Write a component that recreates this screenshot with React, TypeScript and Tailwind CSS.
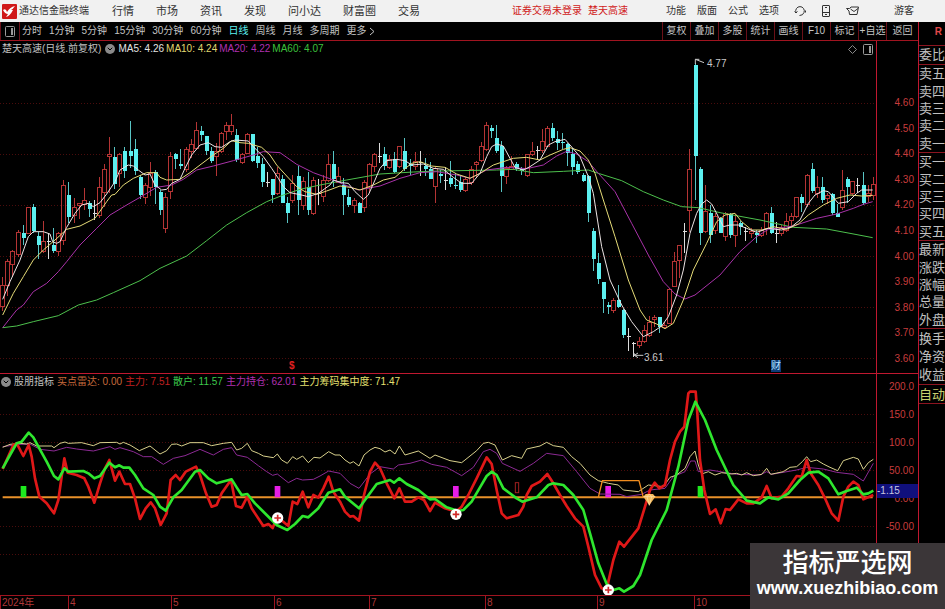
import { ChevronDown } from "lucide-react";

const STEP = 15.27;
const FIRST = 8.4;

// u = up (hollow), d = down (filled), w = flat
type Kind = "u" | "d" | "w";
// kind, high, body top, body bottom, low
type Candle = [Kind, number, number, number, number];

const candles: Candle[] = [
  ["u", 562, 585, 648, 662], ["u", 508, 515, 585, 618], ["u", 480, 485, 522, 560], ["u", 420, 426, 492, 500],
  ["d", 405, 430, 443, 465], ["u", 352, 353, 430, 432], ["d", 343, 352, 422, 430], ["d", 425, 437, 466, 506],
  ["u", 393, 455, 485, 490], ["w", 428, 455, 455, 508], ["d", 415, 466, 482, 490], ["u", 425, 430, 485, 498],
  ["u", 270, 285, 450, 466], ["d", 277, 314, 381, 400], ["u", 325, 352, 375, 400], ["u", 338, 340, 347, 388],
  ["u", 295, 332, 343, 360], ["d", 332, 340, 358, 380], ["w", 330, 370, 370, 390], ["u", 262, 293, 375, 383],
  ["u", 222, 238, 308, 350], ["u", 140, 192, 200, 308], ["d", 170, 200, 282, 298], ["u", 190, 192, 250, 290],
  ["d", 170, 184, 244, 265], ["d", 93, 184, 197, 235], ["d", 146, 178, 244, 256], ["d", 255, 260, 314, 328],
  ["u", 278, 287, 322, 342], ["u", 216, 250, 293, 318], ["d", 240, 247, 290, 343], ["d", 300, 305, 360, 375],
  ["u", 310, 322, 415, 428], ["u", 187, 200, 305, 326], ["d", 190, 193, 206, 237], ["d", 178, 223, 228, 236],
  ["u", 172, 178, 238, 245], ["u", 146, 162, 184, 205], ["u", 95, 122, 176, 180], ["d", 107, 124, 135, 152],
  ["d", 137, 138, 182, 195], ["d", 170, 184, 214, 220], ["u", 160, 184, 200, 258], ["u", 126, 130, 185, 190],
  ["u", 95, 107, 125, 150], ["u", 72, 106, 124, 135], ["d", 117, 136, 210, 215], ["u", 190, 194, 218, 222],
  ["u", 128, 132, 190, 193], ["d", 132, 132, 214, 216], ["d", 172, 198, 220, 235], ["d", 205, 222, 276, 290],
  ["w", 245, 277, 277, 290], ["d", 266, 268, 314, 338], ["u", 230, 250, 310, 315], ["d", 255, 268, 338, 340],
  ["d", 322, 338, 368, 398], ["u", 255, 280, 330, 340], ["d", 228, 258, 330, 376], ["u", 262, 275, 345, 360],
  ["d", 245, 291, 360, 376], ["u", 262, 270, 370, 376], ["w", 268, 310, 310, 345], ["u", 255, 270, 318, 335],
  ["u", 192, 222, 270, 275], ["d", 182, 222, 268, 290], ["u", 232, 258, 276, 280], ["d", 265, 284, 314, 376],
  ["d", 298, 320, 344, 350], ["u", 325, 330, 346, 368], ["d", 335, 338, 368, 370], ["u", 270, 278, 352, 365],
  ["u", 220, 224, 292, 310], ["u", 190, 192, 230, 245], ["w", 160, 200, 200, 218], ["d", 170, 192, 228, 240],
  ["u", 195, 208, 232, 238], ["d", 185, 208, 246, 250], ["u", 168, 170, 228, 235], ["d", 145, 184, 236, 243],
  ["d", 208, 222, 228, 256], ["u", 186, 214, 230, 240], ["w", 182, 216, 216, 258], ["d", 205, 228, 238, 258],
  ["d", 216, 238, 266, 268], ["u", 230, 235, 288, 338], ["d", 240, 252, 257, 280], ["w", 230, 272, 272, 300],
  ["d", 214, 265, 283, 290], ["d", 250, 284, 288, 298], ["d", 255, 275, 300, 305], ["u", 262, 268, 300, 305],
  ["u", 228, 238, 278, 285], ["u", 214, 216, 224, 262], ["u", 155, 170, 212, 215], ["u", 95, 106, 178, 184],
  ["d", 105, 115, 122, 144], ["d", 106, 145, 182, 190], ["d", 152, 168, 258, 306], ["u", 228, 235, 260, 282],
  ["u", 198, 230, 238, 240], ["d", 215, 222, 238, 242], ["d", 230, 238, 243, 255], ["u", 192, 194, 255, 262],
  ["u", 155, 184, 192, 198], ["w", 168, 180, 180, 208], ["u", 118, 155, 180, 190], ["u", 108, 116, 168, 172],
  ["d", 98, 115, 144, 152], ["d", 122, 148, 158, 180], ["d", 130, 155, 160, 178], ["d", 158, 162, 188, 228],
  ["d", 178, 192, 230, 256], ["d", 212, 222, 246, 252], ["d", 248, 254, 274, 277], ["d", 255, 259, 368, 396],
  ["d", 415, 423, 506, 544], ["d", 490, 520, 566, 582], ["d", 576, 577, 628, 668], ["d", 635, 645, 651, 672],
  ["u", 625, 630, 662, 668], ["d", 585, 630, 650, 655], ["d", 658, 660, 736, 745], ["w", 715, 738, 738, 783],
  ["w", 755, 760, 760, 800], ["u", 740, 753, 767, 773], ["u", 705, 722, 755, 758], ["u", 678, 698, 735, 742],
  ["u", 675, 682, 688, 710], ["d", 682, 682, 712, 728], ["u", 695, 705, 712, 715], ["u", 595, 597, 700, 702],
  ["u", 485, 513, 590, 592], ["u", 465, 467, 510, 565], ["w", 398, 425, 425, 490], ["u", 178, 238, 360, 425],
  ["d", -82, -76, 198, 330], ["d", 230, 238, 428, 465], ["u", 285, 365, 425, 430], ["d", 345, 368, 435, 460],
  ["u", 370, 380, 420, 432], ["d", 380, 383, 428, 430], ["u", 365, 370, 438, 452], ["d", 368, 372, 436, 445],
  ["u", 372, 395, 435, 472], ["d", 392, 398, 412, 436], ["w", 410, 425, 427, 452], ["u", 415, 423, 430, 445],
  ["d", 420, 428, 435, 460], ["u", 412, 422, 436, 440], ["u", 365, 370, 415, 435], ["d", 352, 370, 428, 432],
  ["w", 395, 430, 430, 460], ["u", 405, 415, 430, 438], ["u", 370, 395, 422, 425], ["u", 370, 378, 392, 410],
  ["u", 320, 323, 378, 383], ["d", 312, 322, 338, 365], ["u", 252, 255, 342, 350], ["d", 220, 238, 304, 308],
  ["u", 258, 292, 310, 325], ["d", 260, 292, 330, 338], ["u", 310, 317, 325, 342], ["d", 308, 313, 368, 375],
  ["d", 342, 370, 380, 382], ["u", 240, 300, 352, 360], ["d", 260, 266, 290, 340], ["u", 272, 275, 310, 315],
  ["w", 265, 285, 285, 310], ["d", 246, 285, 340, 345], ["u", 285, 310, 320, 335], ["u", 262, 282, 315, 330],
];

const averages = [
  {
    color: "#4dc04d",
    points:
      "8,713 50,708 100,695 175,677 235,645 290,630 340,608 420,572 480,535 560,498 620,452 680,405 740,368 800,335 850,315 900,298 960,285 1040,270 1140,252 1240,246 1320,243 1490,240 1540,238 1600,248 1690,244 1765,240 1795,250 1865,272 1930,305 1990,330 2045,350 2095,353 2160,368 2280,390 2380,412 2480,417 2550,430 2618,443",
  },
  {
    color: "#a832a8",
    points:
      "8,713 50,660 70,645 100,605 140,580 175,545 200,515 240,465 290,415 330,375 380,345 420,322 470,292 515,285 550,268 590,240 640,228 700,212 760,195 790,185 840,188 890,223 940,248 1000,270 1030,283 1075,300 1140,288 1200,265 1260,248 1310,245 1370,255 1410,265 1460,240 1520,232 1580,236 1630,225 1670,198 1700,184 1730,192 1765,215 1795,250 1845,305 1895,400 1945,495 1990,575 2025,612 2055,627 2085,615 2160,555 2220,485 2270,440 2305,418 2380,408 2450,385 2510,372 2560,355 2590,343 2618,335",
  },
  {
    color: "#e6dc78",
    points:
      "8,675 40,610 70,560 100,510 130,480 165,450 200,418 240,408 285,385 320,335 335,315 345,313 370,285 400,265 440,248 470,248 480,262 500,270 540,268 570,248 600,225 640,195 670,175 695,152 720,158 745,160 785,172 810,195 830,225 860,258 890,290 915,305 950,313 980,303 1020,288 1050,292 1080,300 1120,285 1150,270 1185,262 1210,240 1235,220 1260,215 1295,228 1335,232 1370,252 1410,265 1440,250 1480,225 1540,205 1580,202 1620,210 1650,195 1690,178 1710,173 1740,183 1765,210 1785,250 1810,330 1845,440 1885,570 1920,660 1940,690 1970,702 1995,716 2020,700 2050,630 2080,540 2120,460 2150,395 2175,375 2205,370 2225,395 2255,420 2285,420 2320,410 2360,418 2395,402 2425,375 2470,345 2510,325 2550,315 2585,318 2618,316",
  },
  {
    color: "#ece4e4",
    points:
      "8,628 30,575 60,510 85,440 100,425 130,425 150,432 158,455 170,460 180,455 200,412 225,370 245,345 265,340 280,350 300,338 320,312 345,275 360,240 385,225 400,228 415,240 435,255 450,252 465,285 485,300 500,298 515,280 540,268 555,235 575,195 600,165 625,158 645,170 665,172 690,155 705,150 745,153 760,170 790,200 815,235 835,265 850,290 870,308 900,314 925,320 955,310 990,285 1000,270 1025,278 1045,280 1065,305 1090,328 1105,315 1125,270 1140,235 1160,212 1190,208 1215,212 1235,225 1270,222 1300,235 1330,238 1360,262 1385,280 1415,280 1440,250 1460,200 1475,170 1490,162 1510,168 1530,205 1545,232 1570,240 1590,230 1620,210 1645,165 1665,155 1695,148 1710,165 1740,200 1765,260 1780,310 1805,470 1830,570 1865,645 1895,695 1930,740 1960,725 1985,708 2005,680 2030,615 2050,540 2070,430 2090,370 2105,342 2120,330 2135,342 2155,380 2170,410 2190,405 2215,405 2240,415 2270,427 2305,415 2345,420 2375,410 2400,390 2425,340 2445,315 2470,302 2485,305 2515,340 2545,335 2570,310 2585,300 2618,300",
  },
];

const indicatorLines = [
  {
    color: "#8c2a94",
    width: 3,
    points:
      "8,140 60,133 90,132 120,148 162,153 200,142 230,147 280,153 330,140 345,148 360,143 400,155 430,170 455,170 490,193 520,175 555,167 600,148 640,165 670,148 695,143 710,165 742,172 775,197 800,215 818,226 832,222 865,248 890,235 908,240 940,238 960,228 986,213 1020,220 1050,250 1077,265 1110,222 1140,200 1180,207 1195,195 1230,190 1265,180 1295,193 1340,202 1385,227 1420,202 1450,155 1470,148 1490,160 1507,190 1560,214 1600,190 1640,160 1690,167 1730,215 1770,265 1800,282 1860,283 1880,290 1925,283 1950,270 1995,265 2020,230 2055,215 2072,183 2085,183 2095,215 2130,210 2210,223 2280,225 2300,215 2315,223 2390,210 2420,202 2470,207 2510,217 2560,223 2590,243 2620,190",
  },
  {
    color: "#d8d08c",
    width: 3,
    points:
      "8,142 30,133 60,130 80,132 90,128 110,138 155,138 162,143 180,130 195,126 205,130 245,128 280,137 300,128 350,127 360,132 370,127 390,135 418,152 450,138 480,162 500,152 515,133 530,132 545,138 570,128 610,128 635,137 670,130 695,127 710,150 725,145 742,130 755,152 775,160 790,168 820,173 832,162 845,180 862,190 878,170 890,178 908,168 925,188 942,172 960,174 986,155 1005,165 1020,165 1035,180 1050,190 1060,185 1077,198 1092,165 1110,150 1125,142 1140,146 1155,156 1170,150 1185,162 1198,138 1215,165 1255,153 1290,175 1305,165 1350,182 1385,188 1410,168 1430,152 1450,130 1465,127 1485,135 1507,180 1535,167 1565,175 1580,147 1620,138 1640,127 1660,137 1690,142 1715,170 1740,190 1770,225 1795,242 1825,250 1855,255 1870,270 1915,275 1945,255 1990,260 2010,232 2030,225 2055,205 2070,170 2085,153 2095,195 2105,222 2125,215 2145,225 2165,218 2195,222 2210,220 2225,225 2240,218 2260,227 2285,223 2300,205 2312,223 2350,215 2370,202 2390,200 2407,185 2420,170 2432,185 2450,180 2470,192 2490,202 2513,212 2530,182 2560,172 2575,177 2590,208 2605,188 2620,178",
  },
  {
    color: "#f08c1e",
    width: 4,
    points: "1795,292 1807,242 1917,242 1930,292",
  },
  {
    color: "#e01818",
    width: 8,
    points:
      "8,207 40,135 50,130 70,168 86,135 95,170 105,235 118,290 140,310 162,340 175,300 185,230 193,175 203,218 230,225 253,235 265,260 283,308 300,250 315,205 328,180 345,242 358,215 375,252 390,252 405,295 420,357 437,325 452,307 465,325 482,375 500,340 512,240 527,225 540,240 557,215 588,200 600,225 618,280 635,320 650,315 665,280 693,240 708,318 725,323 742,290 755,325 790,378 805,372 818,384 832,350 865,378 878,305 892,312 908,275 925,322 940,285 955,293 970,265 986,230 1000,275 1020,305 1035,335 1050,350 1060,348 1077,362 1092,285 1110,215 1125,188 1140,205 1160,250 1183,295 1198,265 1215,305 1235,305 1255,292 1272,300 1290,333 1305,308 1335,325 1368,335 1385,320 1405,285 1430,235 1460,172 1475,192 1490,270 1505,340 1520,355 1555,345 1570,320 1580,285 1595,258 1620,245 1642,222 1660,250 1680,285 1700,318 1725,355 1750,380 1765,440 1785,525 1805,565 1822,570 1825,545 1840,480 1858,425 1872,440 1915,385 1935,320 1950,270 1964,248 1978,265 1995,255 2010,180 2025,125 2040,95 2053,80 2065,-20 2070,-25 2087,-25 2092,40 2100,180 2113,270 2130,342 2147,328 2162,370 2177,327 2190,330 2215,298 2240,310 2260,310 2285,292 2300,258 2315,295 2345,290 2365,265 2390,228 2405,230 2420,180 2432,220 2455,255 2475,295 2495,340 2515,362 2530,290 2545,260 2560,245 2575,255 2590,298 2620,285",
  },
  {
    color: "#2ee62e",
    width: 8,
    points:
      "8,205 30,165 50,130 65,125 86,98 100,112 118,145 140,185 162,228 175,238 193,205 205,215 250,213 265,220 283,235 300,228 328,188 345,202 358,196 370,203 388,203 405,225 430,265 460,285 480,320 497,332 520,292 545,270 585,215 600,210 625,235 650,250 695,238 710,262 725,285 742,282 765,310 800,345 830,375 862,390 885,372 908,348 925,352 955,325 985,278 1020,268 1035,290 1077,325 1095,300 1130,252 1170,240 1182,248 1198,235 1220,252 1255,270 1290,298 1305,297 1340,322 1375,333 1390,330 1415,305 1440,262 1460,228 1475,215 1490,225 1510,265 1550,295 1567,305 1610,292 1645,255 1660,250 1690,255 1720,285 1750,330 1770,400 1795,490 1820,552 1840,570 1858,565 1872,575 1900,558 1920,525 1955,420 2000,330 2035,200 2065,60 2086,5 2115,60 2150,150 2200,255 2240,302 2280,310 2305,292 2335,298 2365,280 2400,240 2425,218 2455,215 2485,235 2515,283 2540,273 2570,263 2590,283 2605,280 2620,272",
  },
];

const blocks = [
  { x: 62, color: "#1eea1e" },
  { x: 824, color: "#e61ee6" },
  { x: 1359, color: "#e61ee6" },
  { x: 1816, color: "#e61ee6" },
  { x: 2093, color: "#1eea1e" },
];

const crosses = [
  [833, 354],
  [1368, 343],
  [1825, 570],
];

const menu = ["行情", "市场", "资讯", "发现", "问小达", "财富圈", "交易"];
const tools = ["功能", "版面", "公式", "选项"];
const periods = ["分时", "1分钟", "5分钟", "15分钟", "30分钟", "60分钟", "日线", "周线", "月线", "多周期"];
const actions = ["复权", "叠加", "多股", "统计", "画线", "F10", "标记", "+自选", "返回"];
const prices = ["4.60", "4.50", "4.40", "4.30", "4.20", "4.10", "4.00", "3.90", "3.80", "3.70", "3.60"];
const levels = ["200.0", "150.0", "100.0", "50.00", "0.00", "-50.00"];
const months = ["2024年", "4", "5", "6", "7", "8", "9", "10"];

const CandleShape = ({ candle, index }: { candle: Candle; index: number }) => {
  const [kind, high, top, bottom, low] = candle;
  // snapped to whole screen pixels, three units each
  const x = Math.floor((FIRST + STEP * index) / 3) * 3 + 1.5;
  if (kind === "u") {
    return (
      <g stroke="#b43434" strokeWidth={3} fill="none">
        <path d={`M${x} ${high}V${top}M${x} ${bottom}V${low}`} />
        <rect x={x - 6} y={top} width={12} height={bottom - top} />
      </g>
    );
  }
  if (kind === "w") {
    return <path d={`M${x} ${high}V${low}M${x - 6} ${top}H${x + 6}`} stroke="#dcdcdc" strokeWidth={3} />;
  }
  return (
    <g fill="#5cf0f0">
      <rect x={x - 1.5} y={high} width={3} height={low - high} fill="#58c4c4" />
      <rect x={x - 6} y={top} width={12} height={Math.max(bottom - top, 4)} />
    </g>
  );
};

const PriceChart = () => (
  <svg viewBox="0 -99 2628 948" preserveAspectRatio="none" className="block h-[316px] w-full" aria-hidden="true">
    <g stroke="#4a0c0c" strokeWidth={3} strokeDasharray="3 6" shapeRendering="crispEdges">
      {[40, 192, 346, 500, 653, 805].map((y) => (
        <path key={y} d={`M0 ${y}H2628`} />
      ))}
    </g>
    <g shapeRendering="crispEdges">
      {candles.map((candle, i) => (
        <CandleShape key={i} candle={candle} index={i} />
      ))}
    </g>
    {averages.map((line) => (
      <polyline key={line.color} points={line.points} fill="none" stroke={line.color} strokeWidth={3} strokeLinejoin="round" />
    ))}
    <g fill="none" stroke="#c8c8c8" strokeWidth={3}>
      <path d="M2086 -78V-92L2112 -82M2086 -92H2098" />
      <path d="M1903 790V796H1930M1903 796L1914 789M1903 796L1914 803" />
    </g>
  </svg>
);

const IndicatorChart = () => (
  <svg viewBox="0 -33 2628 618" preserveAspectRatio="none" className="block h-[206px] w-full" aria-hidden="true">
    <g stroke="#4a0c0c" strokeWidth={3} strokeDasharray="3 6" shapeRendering="crispEdges">
      {[42, 127, 211, 378, 462].map((y) => (
        <path key={y} d={`M0 ${y}H2628`} />
      ))}
    </g>
    <path d="M8 292H2618" stroke="#e8912a" strokeWidth={6} />
    {blocks.map((b) => (
      <rect key={b.x} x={b.x} y={258} width={17} height={34} fill={b.color} />
    ))}
    <rect x={1546} y={248} width={10} height={30} fill="none" stroke="#a02020" strokeWidth={3} />
    {indicatorLines.map((line) => (
      <polyline
        key={line.color}
        points={line.points}
        fill="none"
        stroke={line.color}
        strokeWidth={line.width}
        strokeLinejoin="round"
      />
    ))}
    {crosses.map(([x, y]) => (
      <g key={x}>
        <circle cx={x} cy={y} r={17} fill="#fff" />
        <path d={`M${x - 10} ${y}H${x + 10}M${x} ${y - 10}V${y + 10}`} stroke="#d02828" strokeWidth={5} />
      </g>
    ))}
    <path d="M1930 290L1937 282H1959L1966 290L1948 316Z" fill="#f5b95a" />
    <path d="M1930 290H1966M1941 290L1948 316L1955 290L1948 282Z" fill="none" stroke="#fde6b0" strokeWidth={2} />
  </svg>
);

const PaneToggle = () => (
  <span className="flex size-[10px] shrink-0 items-center justify-center rounded-full bg-[#8a8a8a] text-black">
    <ChevronDown size={8} strokeWidth={3} />
  </span>
);

const PanelIcon = () => (
  <svg width="10" height="11" viewBox="0 0 10 11" fill="none" stroke="#9a9a9a" aria-hidden="true">
    <rect x="0.5" y="0.5" width="9" height="10" rx="1" />
    <path d="M7 2V9" strokeWidth="2" />
  </svg>
);

const Header = () => (
  <header className="flex h-[22px] items-center bg-[#f1f1f1] pr-[31px] pl-[2px] text-[#333]">
    <svg width="15" height="15" viewBox="0 0 15 15" aria-hidden="true">
      <rect width="15" height="15" rx="1" fill="#d01818" />
      <path d="M1 6Q4 4 5 8Q8 3 13 2Q11 5 9 6L11 6Q8 12 4 13L6 10Q3 10 1 6Z" fill="#fff" />
    </svg>
    <h1 className="ml-[2px] whitespace-nowrap">通达信金融终端</h1>
    <nav className="ml-[23px] flex gap-[22px] text-[11px]">
      {menu.map((item) => (
        <button key={item} className="whitespace-nowrap">
          {item}
        </button>
      ))}
    </nav>
    <p className="ml-auto flex gap-[6px] whitespace-nowrap text-[#d02020]">
      <span>证券交易未登录</span>
      <span>楚天高速</span>
    </p>
    <div className="ml-[38px] flex items-center gap-[11px]">
      {tools.map((item) => (
        <button key={item} className="whitespace-nowrap">
          {item}
        </button>
      ))}
    </div>
    <div className="ml-[15px] flex items-center gap-[14px]">
      <button aria-label="客服">
        <svg width="12" height="12" viewBox="0 0 12 12" fill="none" stroke="currentColor" aria-hidden="true">
          <path d="M2 7.5A4.3 4.3 0 1 1 10 7.5Q9 10.5 5.5 10.5" />
          <path d="M0.5 6.5L2 8L3.5 6.5M11.5 5.5V7.5" />
        </svg>
      </button>
      <button aria-label="手机">
        <svg width="12" height="12" viewBox="0 0 12 12" fill="none" stroke="currentColor" aria-hidden="true">
          <rect x="2.5" y="0.5" width="7" height="11" rx="0.5" />
          <path d="M2.5 7.5H9.5M5 9.5H7M5 2.5H7" />
        </svg>
      </button>
      <button aria-label="消息">
        <svg width="13" height="12" viewBox="0 0 13 12" fill="none" stroke="currentColor" aria-hidden="true">
          <path d="M0.5 3.5H3.5L5 2H12.5L11 9.5H3.5L3 6L0.5 3.5Z" />
          <path d="M4.5 4L8 6.5L12 3.5" />
        </svg>
      </button>
    </div>
    <button className="ml-[35px] whitespace-nowrap">游客</button>
  </header>
);

const Toolbar = () => (
  <div className="flex h-[19px] items-stretch border-b border-[#a01420] text-[#c4c4c4]">
    <button aria-label="侧栏" className="flex w-5 items-center justify-center border-r border-l border-[#6a1018]">
      <PanelIcon />
    </button>
    <nav className="flex items-center gap-[7px] pl-[2px]">
      {periods.map((item) => (
        <button key={item} className={item === "日线" ? "whitespace-nowrap text-[#5cf0f0]" : "whitespace-nowrap"}>
          {item}
        </button>
      ))}
      <button className="flex items-center whitespace-nowrap">
        更多
        <svg width="8" height="9" viewBox="0 0 8 9" fill="none" stroke="currentColor" aria-hidden="true">
          <path d="M3 1L7 4.5L3 8" />
        </svg>
      </button>
    </nav>
    <div className="ml-auto flex">
      {actions.map((item) => (
        <button key={item} className="w-[28px] border-l border-[#6a1018] text-center whitespace-nowrap last:w-[32px]">
          {item}
        </button>
      ))}
    </div>
  </div>
);

const Quotes = () => {
  const groups = [
    { rows: ["卖五", "卖四", "卖三", "卖二", "卖一"], style: "h-[88px]" },
    { rows: ["买一", "买二", "买三", "买四", "买五"], style: "h-[88px]" },
    { rows: ["最新", "涨跌", "涨幅", "总量", "外盘"], style: "h-[88px]" },
    { rows: ["换手", "净资", "收益"], style: "h-[56px]" },
    { rows: ["自动"], style: "h-[19px] text-[#c8d070]" },
  ];
  return (
    <aside className="w-[27px] shrink-0 overflow-hidden border-l border-[#c01830] text-[13px] leading-[17px] text-[#c0c0c0]">
      <div className="h-[23px] pt-[1px] pr-[3px] text-right text-[10px] font-bold text-[#e04848]">R</div>
      <div className="h-[20px] border-y border-[#8c1420] whitespace-nowrap">委比</div>
      {groups.map((g) => (
        <div key={g.rows[0]} className={`flex flex-col justify-around border-b border-[#8c1420] whitespace-nowrap ${g.style}`}>
          {g.rows.map((row) => (
            <span key={row}>{row}</span>
          ))}
        </div>
      ))}
    </aside>
  );
};

const App = () => {
  return (
    <div className="relative overflow-hidden bg-black font-['Liberation_Sans','Noto_Sans_CJK_SC',sans-serif] text-[10px] leading-[14px]">
      <Header />
      <div className="flex">
        <main className="min-w-0 flex-1">
          <Toolbar />
          <section className="flex border-b border-[#c01830]">
            <div className="relative min-w-0 flex-1">
              <div className="flex h-[16px] items-center gap-[2px] pl-[2px] whitespace-nowrap">
                <h2 className="mr-[2px] text-[#c0c0c0]">楚天高速(日线.前复权)</h2>
                <PaneToggle />
                <span className="ml-[1px] text-[#e4e4e4]">MA5: 4.26</span>
                <span className="text-[#e0d870]">MA10: 4.24</span>
                <span className="text-[#b030b0]">MA20: 4.22</span>
                <span className="text-[#3cc03c]">MA60: 4.07</span>
                <svg width="9" height="9" viewBox="0 0 9 9" fill="none" stroke="#888" className="ml-auto" aria-hidden="true">
                  <path d="M4.5 0.5L8.5 4.5L4.5 8.5L0.5 4.5Z" />
                </svg>
                <span className="mr-[3px] ml-[4px]">
                  <PanelIcon />
                </span>
              </div>
              <PriceChart />
              <span className="absolute top-4 left-[707px] text-[#c8c8c8]">4.77</span>
              <span className="absolute bottom-2 left-[644px] text-[#c8c8c8]">3.61</span>
              <span className="absolute bottom-0 left-[33%] font-bold text-[#e02020]">$</span>
              <span className="absolute bottom-[1px] left-[88%] bg-[#0c3c78] leading-[12px] text-[#b8e4ff]">财</span>
            </div>
            <div className="flex w-[42px] shrink-0 flex-col justify-between border-l border-[#c01830] pt-14 pr-1 pb-2 text-right leading-[12px] text-[#c83c3c]">
              {prices.map((p) => (
                <span key={p}>{p}</span>
              ))}
            </div>
          </section>

          <section className="flex border-b border-[#a01420]">
            <div className="min-w-0 flex-1">
              <div className="flex h-[15px] items-center gap-[3px] pl-[1px] whitespace-nowrap">
                <PaneToggle />
                <h2 className="text-[#c0c0c0]">股朋指标</h2>
                <span className="text-[#c86a3c]">买点雷达: 0.00</span>
                <span className="text-[#c02020]">主力: 7.51</span>
                <span className="text-[#3cc84c]">散户: 11.57</span>
                <span className="text-[#b030b0]">主力持仓: 62.01</span>
                <span className="text-[#e6e070]">主力筹码集中度: 71.47</span>
              </div>
              <IndicatorChart />
            </div>
            <div className="relative flex w-[42px] shrink-0 flex-col border-l border-[#c01830] pt-[7px] pr-1 text-right text-[#c83c3c]">
              <div className="flex h-[152px] flex-col justify-between leading-[12px]">
                {levels.map((l) => (
                  <span key={l}>{l}</span>
                ))}
              </div>
              <span className="absolute top-[110px] left-0 h-[14px] w-full bg-[#10107c] text-left text-[#c8c8e0]">-1.15</span>
            </div>
          </section>

          <div className="grid h-[13px] grid-cols-[68fr_103fr_103fr_95fr_116fr_112fr_97fr_224fr] leading-[14px] text-[#b03838]">
            {months.map((m) => (
              <span key={m} className="border-l border-[#a01420] pl-[1px] whitespace-nowrap">
                {m}
              </span>
            ))}
          </div>
        </main>
        <Quotes />
      </div>

      <div className="absolute right-0 bottom-0 flex h-[66px] w-[195px] flex-col items-center bg-[#3b3638] pt-1 whitespace-nowrap text-white">
        <strong className="text-[26px] leading-[32px] font-medium">指标严选网</strong>
        <span className="text-[18px] leading-[18px] font-bold">www.xuezhibiao.com</span>
      </div>
    </div>
  );
};

export default App;
